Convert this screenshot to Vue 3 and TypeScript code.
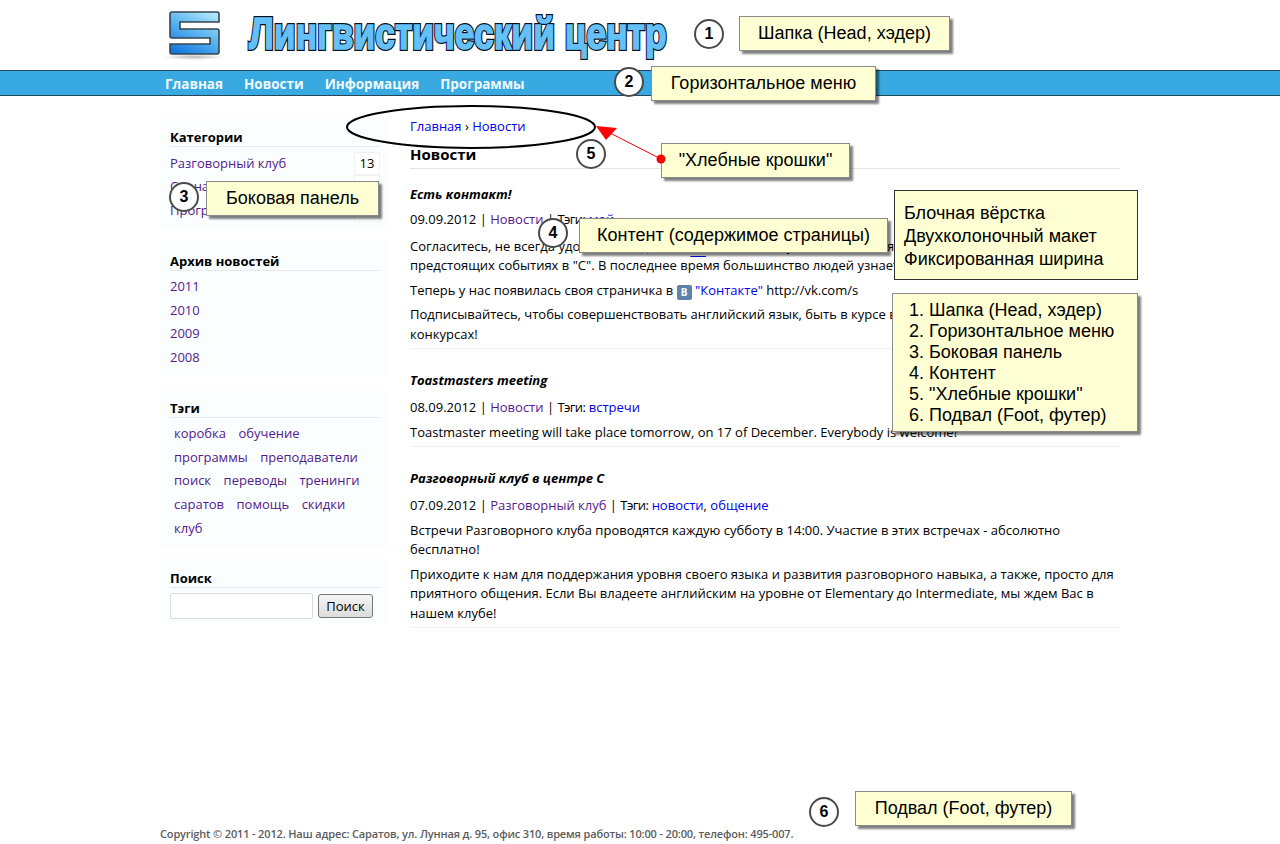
<script setup lang="ts">
interface Callout { text: string; x: number; y: number; w: number }
interface Marker { n: number; x: number; y: number }

const siteTitle = 'Лингвистический центр';
const navItems = ['Главная', 'Новости', 'Информация', 'Программы'];
const categories = [
  { name: 'Разговорный клуб', count: 13 },
  { name: 'Сценарии', count: 4 },
  { name: 'Программы', count: 6 },
];
const years = ['2011', '2010', '2009', '2008'];
const tags = ['коробка', 'обучение', 'программы', 'преподаватели', 'поиск', 'переводы', 'тренинги', 'саратов', 'помощь', 'скидки', 'клуб'];

const callouts: Callout[] = [
  { text: 'Шапка (Head, хэдер)', x: 739, y: 16, w: 211 },
  { text: 'Горизонтальное меню', x: 651, y: 66, w: 225 },
  { text: '"Хлебные крошки"', x: 661, y: 143, w: 189 },
  { text: 'Боковая панель', x: 206, y: 181, w: 173 },
  { text: 'Контент (содержимое страницы)', x: 579, y: 218, w: 309 },
  { text: 'Подвал (Foot, футер)', x: 855, y: 791, w: 217 },
];
const markers: Marker[] = [
  { n: 1, x: 694, y: 19 },
  { n: 2, x: 614, y: 67 },
  { n: 5, x: 576, y: 139 },
  { n: 3, x: 169, y: 182 },
  { n: 4, x: 538, y: 218 },
  { n: 6, x: 809, y: 797 },
];
const legend = ['Шапка (Head, хэдер)', 'Горизонтальное меню', 'Боковая панель', 'Контент', '"Хлебные крошки"', 'Подвал (Foot, футер)'];
</script>

<template>
  <div class="page">
    <header class="head">
      <div class="wrap head-inner">
        <svg class="logo" width="64" height="60" viewBox="0 0 64 60">
          <defs>
            <linearGradient id="lg" x1="0.8" y1="0" x2="0.2" y2="1">
              <stop offset="0" stop-color="#aee6fb" />
              <stop offset="0.5" stop-color="#55b2ef" />
              <stop offset="1" stop-color="#1379e0" />
            </linearGradient>
            <radialGradient id="sh">
              <stop offset="0" stop-color="#bbb" />
              <stop offset="1" stop-color="#fff" />
            </radialGradient>
          </defs>
          <ellipse cx="32" cy="53" rx="31" ry="3" fill="url(#sh)" />
          <path d="M10 8 H55 a2 2 0 0 1 2 2 V18 H18 V25 H55 a2 2 0 0 1 2 2 V48 a2 2 0 0 1-2 2 H10 a2 2 0 0 1-2-2 V40 H48 V34 H10 a2 2 0 0 1-2-2 V10 a2 2 0 0 1 2-2 Z" fill="url(#lg)" stroke="#36444f" stroke-width="1.6" />
        </svg>
        <div class="site-title" :data-text="siteTitle">{{ siteTitle }}</div>
      </div>
    </header>

    <nav class="nav">
      <div class="wrap nav-inner">
        <a v-for="item in navItems" :key="item" class="nav-link">{{ item }}</a>
      </div>
    </nav>

    <main class="wrap main">
      <aside class="side">
        <section class="panel panel-cat">
          <h3>Категории</h3>
          <div v-for="c in categories" :key="c.name" class="cat-row">
            <a class="visited">{{ c.name }}</a>
            <span class="count">{{ c.count }}</span>
          </div>
        </section>
        <section class="panel panel-arch">
          <h3>Архив новостей</h3>
          <a v-for="y in years" :key="y" class="visited year">{{ y }}</a>
        </section>
        <section class="panel panel-tags">
          <h3>Тэги</h3>
          <div class="tags">
            <a v-for="t in tags" :key="t" class="visited">{{ t }}</a>
          </div>
        </section>
        <section class="panel panel-search">
          <h3>Поиск</h3>
          <div class="search">
            <input class="search-input" type="text" />
            <button class="search-btn" type="button">Поиск</button>
          </div>
        </section>
      </aside>

      <div class="content">
        <div class="crumbs"><a class="link">Главная</a> › <a class="link">Новости</a></div>
        <h2>Новости</h2>

        <article class="post post-first">
          <h4>Есть контакт!</h4>
          <div class="meta">09.09.2012 | <a class="visited">Новости</a> | <span class="lbl">Тэги:</span> <a class="link">мой</a></div>
          <p>Согласитесь, не всегда удобно заглядывать <a class="link under">на</a> сайт, чтобы узнать о новостях и<br />предстоящих событиях в "С". В последнее время большинство людей узнает новости в сети.</p>
          <p>Теперь у нас появилась своя страничка в <span class="vk">В</span> <a class="link">"Контакте"</a> http://vk.com/s</p>
          <p>Подписывайтесь, чтобы совершенствовать английский язык, быть в курсе всех новостей<br />конкурсах!</p>
        </article>

        <article class="post">
          <h4>Toastmasters meeting</h4>
          <div class="meta">08.09.2012 | <a class="visited">Новости</a> | <span class="lbl">Тэги:</span> <a class="link">встречи</a></div>
          <p>Toastmaster meeting will take place tomorrow, on 17 of December. Everybody is welcome!</p>
        </article>

        <article class="post">
          <h4>Разговорный клуб в центре С</h4>
          <div class="meta">07.09.2012 | <a class="visited">Разговорный клуб</a> | <span class="lbl">Тэги:</span> <a class="link">новости</a>, <a class="link">общение</a></div>
          <p>Встречи Разговорного клуба проводятся каждую субботу в 14:00. Участие в этих встречах - абсолютно бесплатно!</p>
          <p>Приходите к нам для поддержания уровня своего языка и развития разговорного навыка, а также, просто для приятного общения. Если Вы владеете английским на уровне от Elementary до Intermediate, мы ждем Вас в нашем клубе!</p>
        </article>
      </div>
    </main>

    <footer class="wrap foot">Copyright © 2011 - 2012. Наш адрес: Саратов, ул. Лунная д. 95, офис 310, время работы: 10:00 - 20:00, телефон: 495-007.</footer>

    <!-- annotations drawn over the screenshot -->
    <div
      v-for="c in callouts"
      :key="c.text"
      class="callout"
      :style="{ left: c.x + 'px', top: c.y + 'px', width: c.w + 'px' }"
    >{{ c.text }}</div>
    <div
      v-for="m in markers"
      :key="m.n"
      class="marker"
      :style="{ left: m.x + 'px', top: m.y + 'px' }"
    >{{ m.n }}</div>
    <svg class="overlay" width="1280" height="844" viewBox="0 0 1280 844">
      <ellipse cx="471" cy="127" rx="124" ry="21" fill="none" stroke="#000" stroke-width="2" />
      <line x1="661" y1="159" x2="610" y2="133" stroke="#f00" stroke-width="1" />
      <polygon points="596,126 617,128 606,140" fill="#f00" />
      <circle cx="661" cy="159" r="4.5" fill="#f00" />
    </svg>
    <div class="note">
      <div>Блочная вёрстка</div>
      <div>Двухколоночный макет</div>
      <div>Фиксированная ширина</div>
    </div>
    <ol class="legend">
      <li v-for="l in legend" :key="l">{{ l }}</li>
    </ol>
  </div>
</template>

<style scoped>
.page {
  position: relative;
  display: flex;
  flex-direction: column;
  height: 844px;
  overflow: hidden;
  font-family: "Open Sans", "Noto Sans", sans-serif;
  font-size: 13px;
  line-height: 19.5px;
  color: #000;
  background: #fff;
}
.wrap {
  width: 960px;
  margin: 0 auto;
}
.head {
  height: 70px;
}
.head-inner {
  display: flex;
  align-items: flex-start;
}
.logo {
  margin: 4px 0 0 2px;
}
.site-title {
  position: relative;
  margin: 8px 0 0 23px;
  width: 420px;
  font-family: "Liberation Sans", sans-serif;
  font-weight: 700;
  font-size: 44px;
  line-height: 52px;
  white-space: nowrap;
  color: #06121e;
  -webkit-text-stroke: 4px #06121e;
  transform: scaleX(0.805);
  transform-origin: left center;
}
/* second copy of the title on top: fat blue fill over the black outline */
.site-title::after {
  content: attr(data-text);
  position: absolute;
  left: 0;
  top: 0;
  color: #65c0f8;
  -webkit-text-stroke: 1.5px #65c0f8;
}
.nav {
  height: 24px;
  background: #38a9e1;
  border-top: 1px solid #27475c;
  border-bottom: 1px solid #27475c;
}
.nav-inner {
  display: flex;
  gap: 21px;
  padding-left: 5px;
  box-sizing: border-box;
}
.nav-link {
  font-weight: 700;
  font-size: 13.5px;
  line-height: 26px;
  color: #f2fafd;
}
.main {
  display: flex;
  gap: 20px;
  align-items: flex-start;
}
.side {
  width: 230px;
  padding-top: 22px;
}
.panel {
  background: #fafeff;
  padding: 10px 10px 0;
  box-sizing: border-box;
}
.panel h3 {
  margin: 0 0 4px;
  font-size: 13px;
  line-height: 18px;
  font-weight: 700;
  border-bottom: 1px solid #e6eaec;
}
.panel-cat {
  height: 110px;
  margin-bottom: 12px;
}
.panel-arch {
  height: 136px;
  margin-bottom: 14px;
  padding-top: 12px;
}
.panel-tags {
  height: 157px;
  margin-bottom: 11px;
  padding-top: 9px;
}
.panel-search {
  height: 65px;
  padding-top: 11px;
}
.panel-search h3 {
  margin-bottom: 5px;
}
.cat-row {
  display: flex;
  justify-content: space-between;
  align-items: center;
  box-sizing: border-box;
  height: 23.6px;
  padding-top: 1px;
}
.count {
  width: 24px;
  height: 21px;
  line-height: 21px;
  text-align: center;
  background: #fff;
  border: 1px solid #f0f3f4;
}
.year {
  display: block;
  height: 23.7px;
  line-height: 23.7px;
}
.tags {
  display: flex;
  flex-wrap: wrap;
  column-gap: 12.5px;
  padding-left: 4px;
  line-height: 23.7px;
  width: 210px;
}
.search {
  display: flex;
  align-items: center;
  gap: 5px;
}
.search-input {
  width: 143px;
  height: 26px;
  box-sizing: border-box;
  border: 1px solid #d8dde2;
  border-radius: 2px;
  background: #fff;
  padding: 0;
}
.search-btn {
  width: 55px;
  height: 24px;
  padding: 0;
  font-family: "Open Sans", "Noto Sans", sans-serif;
  font-size: 13px;
  color: #000;
  border: 1px solid #777;
  border-radius: 3px;
  background: linear-gradient(#f4f4f4, #dcdcdc);
}
.visited {
  color: #551a8b;
}
.link {
  color: #0000ee;
}
.under {
  text-decoration: underline;
  text-underline-offset: 5px;
}
.lbl {
  letter-spacing: -0.6px;
}
.content {
  flex: 1;
  padding-top: 21px;
}
.crumbs {
  height: 27px;
}
.content h2 {
  margin: 0;
  padding: 0 0 4px;
  font-size: 15px;
  line-height: 20px;
  font-weight: 700;
  border-bottom: 1px solid #e4e4e4;
}
.post {
  margin-bottom: 21px;
  border-bottom: 1px solid #eef0f0;
}
.post h4 {
  margin: 0 0 8px;
  font-size: 13px;
  line-height: 20px;
  font-weight: 700;
  font-style: italic;
}
.meta {
  margin-bottom: 5px;
}
.post-first {
  margin-top: 15px;
}
.post-first h4 {
  margin-bottom: 6px;
}
.post-first .meta {
  margin-bottom: 7px;
}
.post p {
  margin: 0 0 5px;
}
.post p:last-child {
  margin-bottom: 4px;
}
.vk {
  display: inline-block;
  width: 15px;
  height: 15px;
  line-height: 15px;
  vertical-align: -1px;
  text-align: center;
  font-size: 10px;
  font-weight: 700;
  color: #fff;
  background: #5d83ad;
  border-radius: 2px;
}
.foot {
  margin-top: auto;
  margin-bottom: 3px;
  font-size: 11px;
  line-height: 14px;
  font-weight: 600;
  color: #5c5c5c;
  letter-spacing: -0.15px;
}
.overlay {
  position: absolute;
  left: 0;
  top: 0;
  pointer-events: none;
}
.callout,
.note,
.legend {
  position: absolute;
  box-sizing: border-box;
  font-family: "Liberation Sans", Arial, sans-serif;
  font-size: 18px;
  color: #000;
  background: #ffffd4;
}
.callout {
  height: 35px;
  line-height: 33px;
  text-align: center;
  white-space: nowrap;
  border: 1px solid #8a8a8a;
  box-shadow: 3px 3px 2px rgba(0, 0, 0, 0.5);
}
.marker {
  position: absolute;
  box-sizing: border-box;
  width: 30px;
  height: 30px;
  line-height: 26px;
  text-align: center;
  font-family: "Liberation Sans", Arial, sans-serif;
  font-size: 16px;
  font-weight: 700;
  background: #fff;
  border: 2px solid #4a4a4a;
  border-radius: 50%;
}
.note {
  left: 894px;
  top: 190px;
  width: 244px;
  height: 90px;
  padding: 11px 9px;
  line-height: 23px;
  border: 1px solid #333;
}
.legend {
  left: 892px;
  top: 293px;
  width: 246px;
  height: 139px;
  margin: 0;
  padding: 6px 0 0 36px;
  line-height: 21px;
  border: 1px solid #8a8a8a;
  box-shadow: 3px 3px 2px rgba(0, 0, 0, 0.5);
}
</style>
<style>
body {
  margin: 0;
  background: #fff;
}
</style>
